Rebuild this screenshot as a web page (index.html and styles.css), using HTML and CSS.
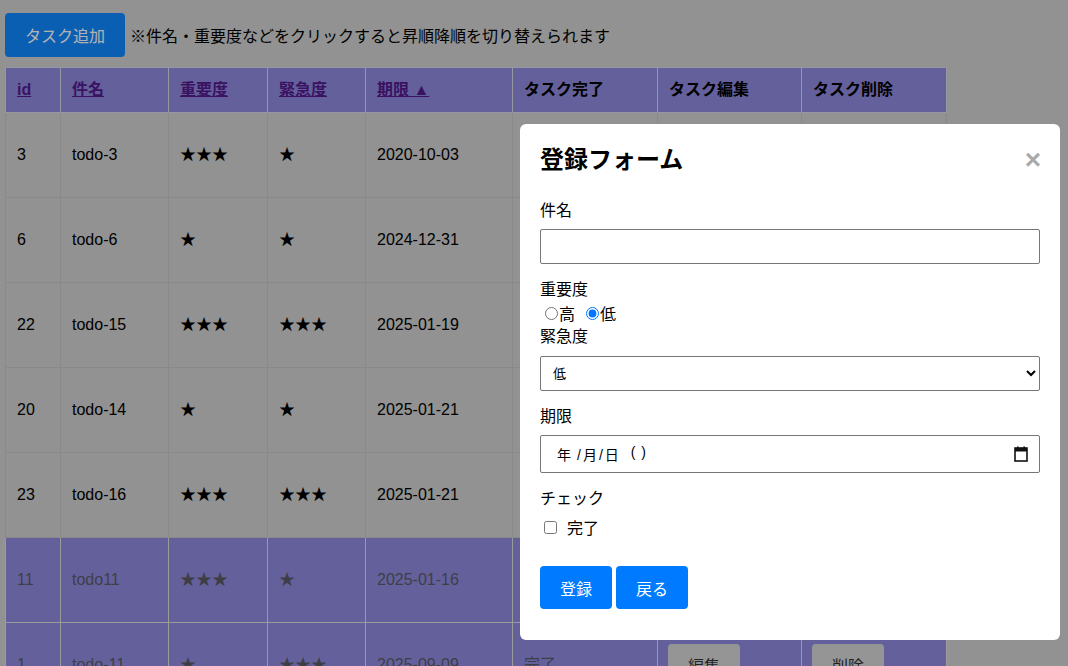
FILE: index.html
```html
<!DOCTYPE html>
<html lang="ja">
<head>
<meta charset="utf-8">
<title>タスク一覧</title>
<link rel="stylesheet" href="styles.css">
</head>
<body>
<div class="page">
  <div class="toolbar">
    <button class="btn-add">タスク追加</button>
    <span class="note">※件名・重要度などをクリックすると昇順降順を切り替えられます</span>
  </div>
  <table class="tasks">
    <colgroup>
      <col class="c-id"><col class="c-name"><col class="c-imp"><col class="c-urg"><col class="c-date"><col class="c-done"><col class="c-edit"><col class="c-del">
    </colgroup>
    <thead>
      <tr>
        <th><a href="#">id</a></th>
        <th><a href="#">件名</a></th>
        <th><a href="#">重要度</a></th>
        <th><a href="#">緊急度</a></th>
        <th><a href="#">期限 ▲</a></th>
        <th>タスク完了</th>
        <th>タスク編集</th>
        <th>タスク削除</th>
      </tr>
    </thead>
    <tbody>
      <tr><td>3</td><td>todo-3</td><td>★★★</td><td>★</td><td>2020-10-03</td><td>未完了</td><td><button class="btn-row">編集</button></td><td><button class="btn-row">削除</button></td></tr>
      <tr><td>6</td><td>todo-6</td><td>★</td><td>★</td><td>2024-12-31</td><td>未完了</td><td><button class="btn-row">編集</button></td><td><button class="btn-row">削除</button></td></tr>
      <tr><td>22</td><td>todo-15</td><td>★★★</td><td>★★★</td><td>2025-01-19</td><td>未完了</td><td><button class="btn-row">編集</button></td><td><button class="btn-row">削除</button></td></tr>
      <tr><td>20</td><td>todo-14</td><td>★</td><td>★</td><td>2025-01-21</td><td>未完了</td><td><button class="btn-row">編集</button></td><td><button class="btn-row">削除</button></td></tr>
      <tr><td>23</td><td>todo-16</td><td>★★★</td><td>★★★</td><td>2025-01-21</td><td>未完了</td><td><button class="btn-row">編集</button></td><td><button class="btn-row">削除</button></td></tr>
      <tr class="done"><td>11</td><td>todo11</td><td>★★★</td><td>★</td><td>2025-01-16</td><td>完了</td><td><button class="btn-row">編集</button></td><td><button class="btn-row">削除</button></td></tr>
      <tr class="done"><td>1</td><td>todo-11</td><td>★</td><td>★★★</td><td>2025-09-09</td><td>完了</td><td><button class="btn-row">編集</button></td><td><button class="btn-row">削除</button></td></tr>
    </tbody>
  </table>
</div>

<div class="overlay">
  <div class="modal">
    <div class="modal-head">
      <h2 class="modal-title">登録フォーム</h2>
      <span class="close">×</span>
    </div>
    <form class="form">
      <div class="group">
        <label class="lbl">件名</label>
        <input class="field" type="text">
      </div>
      <div class="group tight">
        <label class="lbl lbl-flush">重要度</label>
        <div class="radios">
          <label class="opt"><input type="radio" name="imp">高</label>
          <label class="opt"><input type="radio" name="imp" checked>低</label>
        </div>
      </div>
      <div class="group">
        <label class="lbl lbl-sel">緊急度</label>
        <select class="field select"><option>低</option><option>高</option></select>
      </div>
      <div class="group">
        <label class="lbl">期限</label>
        <div class="field datebox">
          <span class="date-text"><span>年</span><span class="d-sep">/月/日</span><span class="d-paren">( )</span></span>
          <svg class="cal" width="14" height="16" viewBox="0 0 14 16" aria-hidden="true">
            <rect x="1" y="2" width="12" height="13" fill="none" stroke="#111" stroke-width="1.6"/>
            <rect x="1" y="2" width="12" height="3.5" fill="#111"/>
            <rect x="3" y="0.5" width="1.6" height="2.5" fill="#111"/>
            <rect x="9.4" y="0.5" width="1.6" height="2.5" fill="#111"/>
          </svg>
        </div>
      </div>
      <div class="group-check">
        <label class="lbl lbl-flush">チェック</label>
        <label class="check"><input type="checkbox"> 完了</label>
      </div>
      <div class="actions">
        <button type="button" class="btn-primary">登録</button>
        <button type="button" class="btn-primary">戻る</button>
      </div>
    </form>
  </div>
</div>
</body>
</html>
```

FILE: styles.css
```css
* { box-sizing: border-box; }

html, body {
  margin: 0;
  padding: 0;
}

body {
  background: #d1d1d1;
  font-family: "Liberation Sans", "Noto Sans CJK JP", sans-serif;
  font-size: 16px;
  color: #000;
  height: 666px;
  overflow: hidden;
}

.page {
  padding: 13px 5px 0 5px;
}

.toolbar {
  display: flex;
  align-items: center;
  gap: 5px;
  margin-bottom: 10px;
}

.btn-add {
  width: 120px;
  height: 44px;
  border: none;
  border-radius: 4px;
  background: #1088ff;
  color: #fff;
  font-family: inherit;
  font-size: 16px;
}

.note {
  font-size: 16px;
}

.tasks {
  border-collapse: collapse;
  width: 941px;
  table-layout: fixed;
  background: #d1d1d1;
}

.c-id { width: 55px; }
.c-name { width: 108px; }
.c-imp { width: 99px; }
.c-urg { width: 98px; }
.c-date { width: 147px; }
.c-done { width: 145px; }
.c-edit { width: 144px; }
.c-del { width: 145px; }

.tasks th,
.tasks td {
  border: 1px solid #c4c4c4;
  padding: 10px 11px;
  text-align: left;
  line-height: 24px;
}

.tasks thead tr {
  background: #908ae0;
}

.tasks th {
  font-weight: bold;
  height: 45px;
  border-color: #d8d8e8;
}

.tasks th a {
  color: #551a8b;
}

.tasks td {
  height: 85px;
  vertical-align: middle;
}

.tasks tr.done {
  background: #908ae0;
  color: #5a5a66;
}

.tasks tr.done td {
  border-color: #dedede;
}

.btn-row {
  display: block;
  width: 72px;
  height: 43px;
  margin-left: -1px;
  border: none;
  border-radius: 4px;
  background: #d6d6d6;
  color: #333;
  font-family: inherit;
  font-size: 16px;
}

.overlay {
  position: fixed;
  inset: 0;
  background: rgba(0, 0, 0, 0.3);
}

.modal {
  position: absolute;
  left: 520px;
  top: 124px;
  width: 540px;
  background: #fff;
  border-radius: 6px;
  padding: 20px 20px 31px 20px;
}

.modal-head {
  display: flex;
  justify-content: space-between;
  align-items: center;
  height: 32px;
  margin-bottom: 23px;
}

.modal-title {
  margin: 0;
  font-size: 24px;
  line-height: 32px;
  font-weight: bold;
}

.close {
  color: #aaa;
  font-size: 28px;
  font-weight: bold;
  line-height: 32px;
  margin-right: -1px;
}

.form {
  margin: 0;
}

.group {
  margin-bottom: 14px;
}

.group.tight {
  margin-bottom: 1px;
}

.lbl {
  display: block;
  line-height: 24px;
  margin-bottom: 6px;
}

.lbl-flush {
  margin-bottom: 0;
}

.lbl-sel {
  margin-bottom: 7px;
}

.field {
  display: block;
  width: 500px;
  height: 35px;
  border: 1px solid #767676;
  border-radius: 2px;
  font-family: inherit;
  background: #fff;
}

.select {
  padding: 0 8px;
  font-size: 13px;
  color: #000;
}

.datebox {
  height: 38px;
  display: flex;
  align-items: center;
  justify-content: space-between;
  padding: 0 11px 0 16px;
  font-size: 14px;
}

.date-text {
  display: flex;
  gap: 6px;
}

.d-sep {
  letter-spacing: 2px;
}

.d-paren {
  margin-left: 4px;
  letter-spacing: 1px;
}

.radios {
  display: flex;
  align-items: center;
  height: 22px;
}

.opt {
  display: flex;
  align-items: center;
  margin-right: 6px;
}

.opt input {
  margin: 0 1px 0 5px;
}

.group-check {
  margin-bottom: 27px;
}

.check {
  display: flex;
  align-items: center;
  height: 24px;
  margin-top: 4px;
}

.check input {
  margin: 0 10px 0 4px;
}

.actions {
  display: flex;
  gap: 4px;
}

.btn-primary {
  width: 72px;
  height: 43px;
  border: none;
  border-radius: 4px;
  background: #007bff;
  color: #fff;
  font-family: inherit;
  font-size: 16px;
}
```
